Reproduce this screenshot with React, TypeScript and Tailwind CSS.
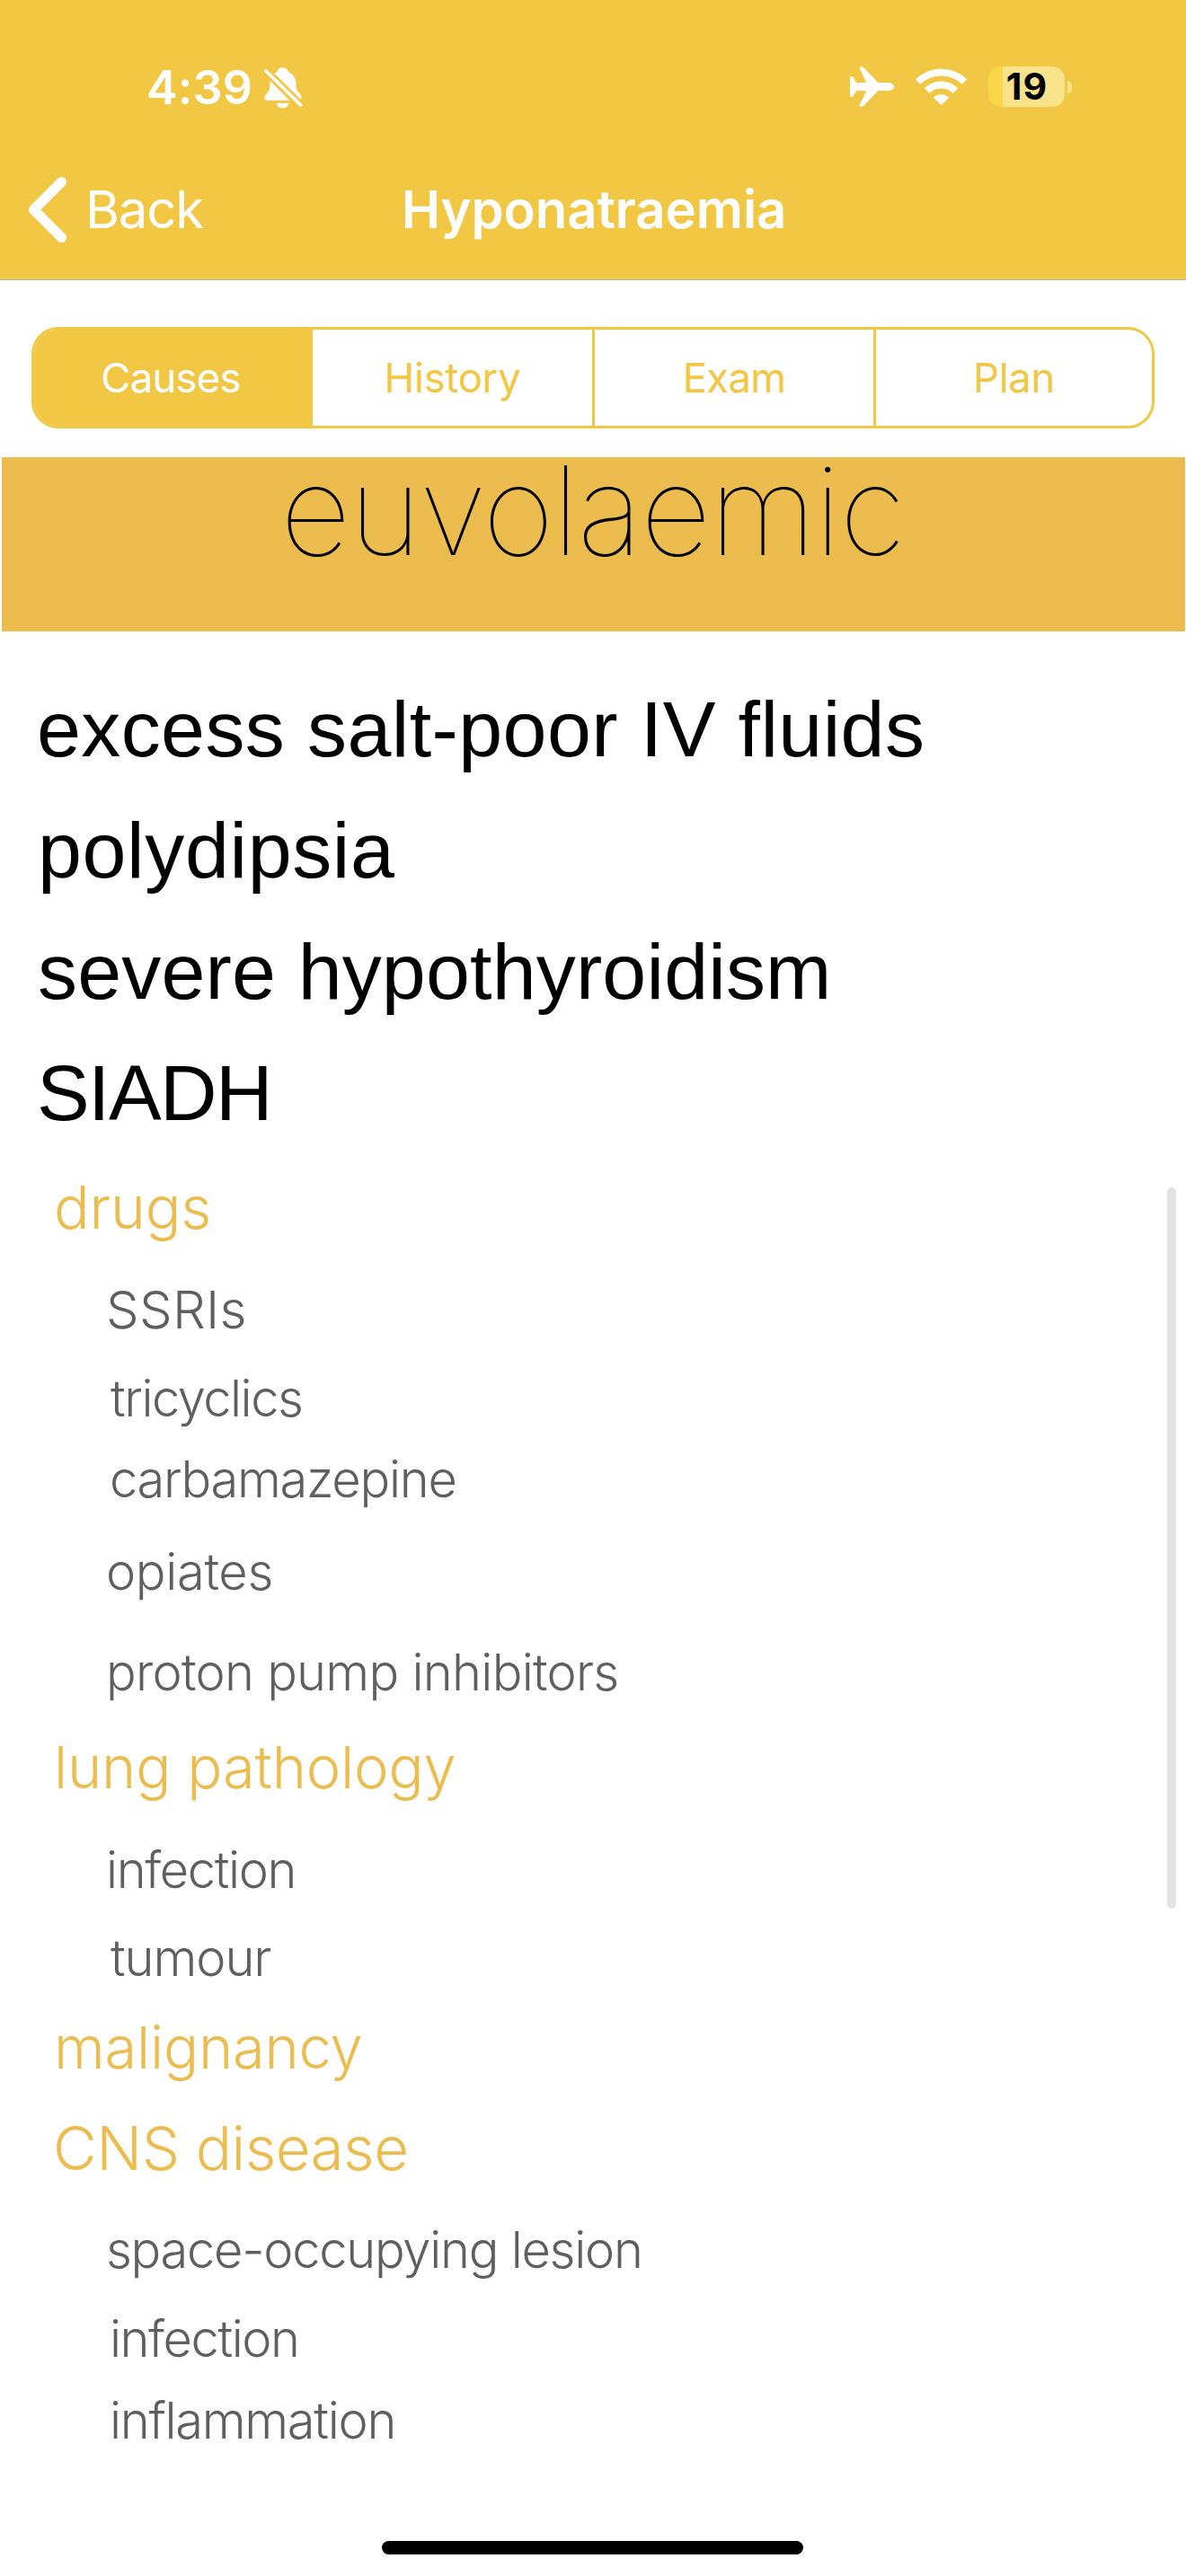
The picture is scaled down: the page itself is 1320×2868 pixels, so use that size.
type Item = { text: string; kind: "cause" | "group" | "detail"; spacing: string };

const items: Item[] = [
  { text: "excess salt-poor IV fluids", kind: "cause", spacing: "mt-[59px] pl-[41px] tracking-[0.39px]" },
  { text: "polydipsia", kind: "cause", spacing: "mt-[35px] pl-[42px] tracking-[0.62px]" },
  { text: "severe hypothyroidism", kind: "cause", spacing: "mt-[35px] pl-[42px] tracking-[0.15px]" },
  { text: "SIADH", kind: "cause", spacing: "mt-[35px] pl-[41px] tracking-[-1.6px]" },
  { text: "drugs", kind: "group", spacing: "mt-[37px] pl-[60px] tracking-[-0.2px] text-[66px]!" },
  { text: "SSRIs", kind: "detail", spacing: "mt-[42px] pl-[118px] tracking-[0.33px] text-[58px]!" },
  { text: "tricyclics", kind: "detail", spacing: "mt-[35px] pl-[123px] tracking-[-1.5px]" },
  { text: "carbamazepine", kind: "detail", spacing: "mt-[26px] pl-[122px] tracking-[-1.27px]" },
  { text: "opiates", kind: "detail", spacing: "mt-[39px] pl-[118px] tracking-[-0.34px]" },
  { text: "proton pump inhibitors", kind: "detail", spacing: "mt-[48px] pl-[118px] tracking-[-0.73px]" },
  { text: "lung pathology", kind: "group", spacing: "mt-[34px] pl-[60px] tracking-[-0.17px]" },
  { text: "infection", kind: "detail", spacing: "mt-[42px] pl-[118px] tracking-[-1.41px]" },
  { text: "tumour", kind: "detail", spacing: "mt-[34px] pl-[123px] tracking-[-1.09px]" },
  { text: "malignancy", kind: "group", spacing: "mt-[28px] pl-[60px] tracking-[-0.2px]" },
  { text: "CNS disease", kind: "group", spacing: "mt-[32px] pl-[59px] tracking-[-0.51px] text-[67px]!" },
  { text: "space-occupying lesion", kind: "detail", spacing: "mt-[41px] pl-[118px] tracking-[-1.28px]" },
  { text: "infection", kind: "detail", spacing: "mt-[35px] pl-[122px] tracking-[-1.46px]" },
  { text: "inflammation", kind: "detail", spacing: "mt-[27px] pl-[122px] tracking-[-1.29px]" },
];

const kinds = {
  cause: "h-[100px] font-['Liberation_Sans',sans-serif] text-[88px] leading-[100px] text-black",
  group: "h-[80px] text-[65px] font-light leading-[80px]! text-[#ecbc4f]",
  detail: "h-[64px] text-[56px] font-light leading-[64px]! text-[#5f5f5f]",
};

function BellOff() {
  return (
    <svg className="ml-[13px] mt-[13px] h-[46px] w-[43px]" viewBox="881 76 129 138">
      <path
        fill="#fff"
        d="M943 77C953 77 960 83 962 92C978 98 986 111 987 128C988 150 990 153 1001 166C1004 170 1005 173 1005 177C1005 183 1002 186 997 186H890C885 186 882 183 882 178C882 173 884 170 888 166C897 156 900 151 900 128C901 111 909 98 924 92C926 83 933 77 943 77ZM922 195H964C962 205 954 212 943 212C932 212 924 205 922 195Z"
      />
      <path stroke="#f2c744" strokeWidth="28" d="M870 71L1024 224" />
      <path stroke="#fff" strokeWidth="11" strokeLinecap="round" d="M887 88L1003 202" />
    </svg>
  );
}

function Plane() {
  return (
    <svg className="h-[45px] w-[49px]" viewBox="201 77 147 135" fill="#fff">
      <path d="M201 111H207Q211 111 213 115L223 132L256 130L233 84Q231 78 236 78H241Q245 78 248 82L295 131H325C340 131 348 138 348 144.500C348 151 340 158 325 158H295L248 207Q245 211 241 211H236Q231 211 233 205L256 159L223 157L213 174Q211 178 207 178H201Z" />
    </svg>
  );
}

function Wifi() {
  return (
    <svg className="ml-[23px] h-[43px] w-[59px]" viewBox="417 74 177 129" fill="#fff" stroke="#fff" strokeWidth="3" strokeLinejoin="round">
      <path d="M421 114A123 123 0 0 1 590 114L575 128.500A101 101 0 0 0 436 128.500Z" />
      <path d="M451 144A78 78 0 0 1 560 144L545 158.500A58 58 0 0 0 466 158.500Z" />
      <path d="M481 175A36 36 0 0 1 530 175L505.500 199Z" />
    </svg>
  );
}

function Battery() {
  return (
    <div className="ml-[23px] flex items-center gap-[3px]">
      <div className="flex h-[45px] w-[85px] items-center justify-center rounded-[14px] bg-[linear-gradient(to_right,#f7d748_16px,#f8e28a_16px)]">
        <span className="pl-px text-[41px] font-bold leading-[45px] tracking-[1px] text-black">19</span>
      </div>
      <div className="h-[14px] w-[5px] rounded-r-full bg-[#f8e28a]" />
    </div>
  );
}

export default function App() {
  return (
    <div className="relative flex h-[2868px] w-[1320px] flex-col overflow-hidden bg-white font-['Inter',sans-serif]">
      <header className="h-[312px] shrink-0 border-b border-[#b5b2a8] bg-[#f2c744] pt-[62px] text-white">
        <div className="flex h-[72px] items-start justify-between pl-[163px] pr-[127px]">
          <div className="flex">
            <span className="text-[52px] font-semibold leading-[72px] tracking-[0.13px]">4:39</span>
            <BellOff />
          </div>
          <div className="flex items-center pt-[12px]">
            <Plane />
            <Wifi />
            <Battery />
          </div>
        </div>
        <div className="mt-[59px] grid h-[80px] grid-cols-[1fr_auto_1fr] items-center">
          <div className="flex items-center pl-[31px]">
            <svg className="h-[76px] w-[44px]" viewBox="0 0 44 76" fill="none" stroke="#fff" strokeWidth="11" strokeLinecap="round" strokeLinejoin="round">
              <path d="M37.500 7.500L6.500 38.500L37.500 69.500" />
            </svg>
            <span className="ml-[20px] text-[58px] leading-[80px] tracking-[-1.1px]">Back</span>
          </div>
          <h1 className="pl-[2px] text-[58px] font-semibold leading-[80px] tracking-[-0.07px]">Hyponatraemia</h1>
        </div>
      </header>

      <nav className="mx-[35px] mt-[52px] grid h-[113px] shrink-0 grid-cols-[310px_311px_313px_310px] overflow-hidden rounded-[30px] border-[3px] border-[#f2c744] text-[45.5px] leading-[107px] text-[#f2c744]">
        <div className="bg-[#f2c744] pr-[6px] text-center tracking-[-0.8px] text-white">Causes</div>
        <div className="text-center tracking-[-0.3px]">History</div>
        <div className="border-l-[3px] border-[#f2c744] text-center tracking-[-0.8px]">Exam</div>
        <div className="border-l-[3px] border-[#f2c744] text-center tracking-[-0.4px]">Plan</div>
      </nav>

      <h2 className="ml-[2px] mr-[1px] mt-[32px] h-[194px] shrink-0 bg-[#ecbc4f] pl-[310px] text-[137px] font-thin leading-[118px] tracking-[-1.7px] text-black">
        euvolaemic
      </h2>

      <ul>
        {items.map((item, i) => (
          <li key={i} className={`whitespace-nowrap ${kinds[item.kind]} ${item.spacing}`}>
            {item.text}
          </li>
        ))}
      </ul>

      <div className="absolute left-[1299px] top-[1322px] h-[803px] w-[10px] rounded-full bg-[#e3e3e3]" />
      <div className="absolute bottom-[24px] left-[425px] h-[15px] w-[469px] rounded-full bg-black" />
    </div>
  );
}
